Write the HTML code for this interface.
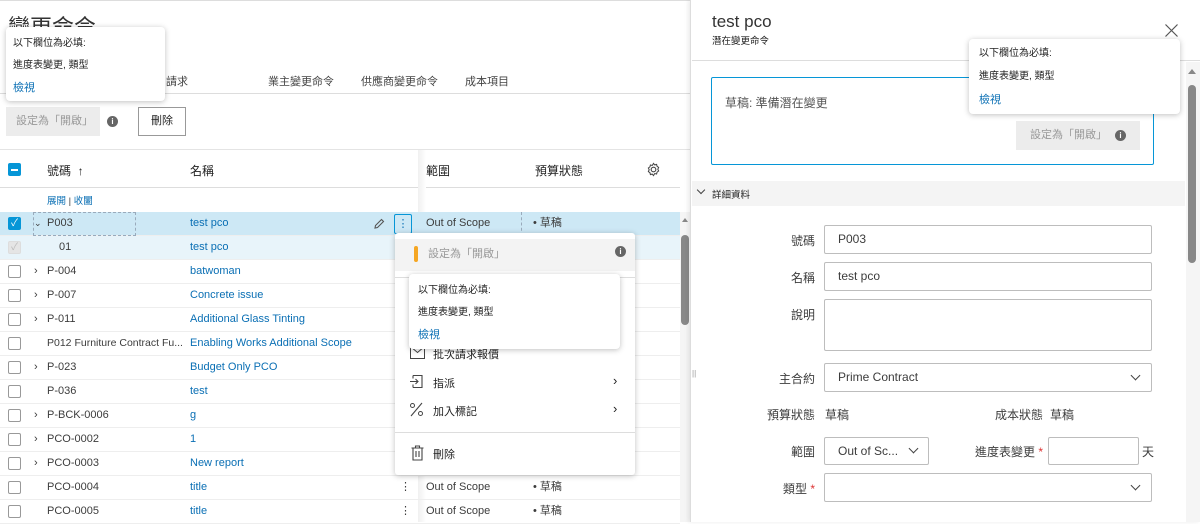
<!DOCTYPE html>
<html><head><meta charset="utf-8"><style>
*{box-sizing:border-box;margin:0;padding:0}
body{width:1200px;height:522px;overflow:hidden;background:#fff;font-family:"Liberation Sans","Noto Sans CJK TC",sans-serif;font-size:11px;color:#3c3c3c;position:relative}
.a{position:absolute}
.row{position:absolute;left:0;width:680px;height:24px;border-bottom:1px solid #eee;font-size:11px;line-height:23px}
.cb{position:absolute;left:8px;top:5px;width:13px;height:13px;border:1px solid #999;border-radius:2px;background:#fff}
.lnk{color:#0a6fb4}
.pop{position:absolute;background:#fff;border-radius:4px;box-shadow:0 1px 6px rgba(0,0,0,.25);font-size:10px;color:#222}
.inp{position:absolute;border:1px solid #bdbdbd;border-radius:2px;background:#fff;font-size:12px;color:#3c3c3c;padding-left:13px;line-height:27px}
.lbl{position:absolute;font-size:12px;color:#3c3c3c;text-align:right}
.chev{position:absolute;width:7px;height:7px;border-right:1.3px solid #444;border-bottom:1.3px solid #444;transform:rotate(45deg)}
.info{display:inline-block;width:11px;height:11px;border-radius:50%;background:#666;color:#fff;font-size:8px;line-height:11px;text-align:center;font-weight:bold}
</style></head><body>
<div class="a" style="left:0;top:0;width:1200px;height:1px;background:#ddd"></div>
<div class="a" style="left:8px;top:10px;font-size:22px;color:#333">變更命令</div>
<div class="a" style="left:166px;top:73px;font-size:11px;color:#444">請求</div>
<div class="a" style="left:268px;top:73px;font-size:11px;color:#444">業主變更命令</div>
<div class="a" style="left:361px;top:73px;font-size:11px;color:#444">供應商變更命令</div>
<div class="a" style="left:465px;top:73px;font-size:11px;color:#444">成本項目</div>
<div class="a" style="left:0;top:93px;width:690px;height:1px;background:#ddd"></div>
<div class="a" style="left:6px;top:107px;width:94px;height:29px;background:#ececec;color:#999;font-size:11px;line-height:29px;padding-left:10px">設定為「開啟」</div>
<div class="a" style="left:107px;top:115px"><span class="info">i</span></div>
<div class="a" style="left:138px;top:107px;width:48px;height:29px;border:1px solid #999;font-size:11px;line-height:27px;text-align:center;color:#222">刪除</div>
<div class="pop" style="left:6px;top:27px;width:159px;height:74px">
<div class="a" style="left:7px;top:7px">以下欄位為必填:</div>
<div class="a" style="left:7px;top:29px">進度表變更, 類型</div>
<div class="a lnk" style="left:7px;top:52px;font-size:11px">檢視</div>
</div>
<div class="a" style="left:0;top:149px;width:690px;height:1px;background:#e4e4e4"></div>
<div class="a" style="left:0;top:150px;width:418px;height:38px;border-bottom:1px solid #ddd"></div>
<div class="a" style="left:418px;top:150px;width:8px;height:372px;background:linear-gradient(90deg,rgba(0,0,0,.06),rgba(0,0,0,0))"></div>
<div class="a" style="left:8px;top:163px;width:13px;height:13px;background:#0696d7;border-radius:2px"><div style="margin:6px 3px;height:1.5px;background:#fff"></div></div>
<div class="a" style="left:47px;top:162px;font-size:12px;color:#222">號碼 &nbsp;↑</div>
<div class="a" style="left:190px;top:162px;font-size:12px;color:#222">名稱</div>
<div class="a" style="left:426px;top:162px;font-size:12px;color:#222">範圍</div>
<div class="a" style="left:535px;top:162px;font-size:12px;color:#222">預算狀態</div>
<svg class="a" style="left:646px;top:162px" width="15" height="15" viewBox="0 0 16 16"><circle cx="8" cy="8" r="2.5" fill="none" stroke="#444" stroke-width="1.2"/><path d="M8 1.5l1.3 1.6 2-.5.5 2 1.7 1.2-.9 1.9.9 1.9-1.7 1.2-.5 2-2-.5L8 14.5l-1.3-1.6-2 .5-.5-2-1.7-1.2.9-1.9-.9-1.9 1.7-1.2.5-2 2 .5z" fill="none" stroke="#444" stroke-width="1.1"/></svg>
<div class="a" style="left:426px;top:187px;width:254px;height:1px;background:#ddd"></div>
<div class="a" style="left:47px;top:193px;font-size:9.5px"><span class="lnk">展開</span> | <span class="lnk">收闔</span></div>
<div class="row" style="top:212px;background:#cde8f5">
<div class="cb" style="background:#0696d7;border-color:#0696d7;color:#fff;font-size:10px;line-height:11px;text-align:center">✓</div>
<span class="a" style="left:34px;font-size:9px">⌄</span>
<div class="a" style="left:33px;top:0;width:103px;height:24px;border:1px dashed #9ab"></div>
<span class="a" style="left:47px">P003</span><span class="a lnk" style="left:190px">test pco</span>
<svg class="a" style="left:373px;top:6px" width="12" height="12" viewBox="0 0 12 12"><path d="M8.5 1.5l2 2-6 6-2.5.5.5-2.5z" fill="none" stroke="#555" stroke-width="1.1"/></svg>
<div class="a" style="left:394px;top:2px;width:18px;height:20px;border:1px solid #0696d7;border-radius:2px;text-align:center;color:#0a6fb4;line-height:18px">⋮</div>
<div class="a" style="left:421px;top:0;width:101px;height:24px;border-right:1px dashed #9ab"></div>
<span class="a" style="left:426px">Out of Scope</span><span class="a" style="left:533px">• 草稿</span>
</div>
<div class="row" style="top:236px;background:#e8f4fa"><div class="cb" style="background:#e5e5e5;border-color:#ddd;color:#bbb;font-size:10px;line-height:11px;text-align:center">✓</div><span class="a" style="left:59px">01</span><span class="a lnk" style="left:190px">test pco</span></div>
<div class="row" style="top:260px"><div class="cb"></div><span class="a" style="left:34px">›</span><span class="a" style="left:47px">P-004</span><span class="a lnk" style="left:190px">batwoman</span></div>
<div class="row" style="top:284px"><div class="cb"></div><span class="a" style="left:34px">›</span><span class="a" style="left:47px">P-007</span><span class="a lnk" style="left:190px">Concrete issue</span></div>
<div class="row" style="top:308px"><div class="cb"></div><span class="a" style="left:34px">›</span><span class="a" style="left:47px">P-011</span><span class="a lnk" style="left:190px">Additional Glass Tinting</span></div>
<div class="row" style="top:332px"><div class="cb"></div><span class="a" style="left:47px;font-size:10.5px">P012 Furniture Contract Fu...</span><span class="a lnk" style="left:190px">Enabling Works Additional Scope</span></div>
<div class="row" style="top:356px"><div class="cb"></div><span class="a" style="left:34px">›</span><span class="a" style="left:47px">P-023</span><span class="a lnk" style="left:190px">Budget Only PCO</span></div>
<div class="row" style="top:380px"><div class="cb"></div><span class="a" style="left:47px">P-036</span><span class="a lnk" style="left:190px">test</span></div>
<div class="row" style="top:404px"><div class="cb"></div><span class="a" style="left:34px">›</span><span class="a" style="left:47px">P-BCK-0006</span><span class="a lnk" style="left:190px">g</span></div>
<div class="row" style="top:428px"><div class="cb"></div><span class="a" style="left:34px">›</span><span class="a" style="left:47px">PCO-0002</span><span class="a lnk" style="left:190px">1</span></div>
<div class="row" style="top:452px"><div class="cb"></div><span class="a" style="left:34px">›</span><span class="a" style="left:47px">PCO-0003</span><span class="a lnk" style="left:190px">New report</span></div>
<div class="row" style="top:476px"><div class="cb"></div><span class="a" style="left:47px">PCO-0004</span><span class="a lnk" style="left:190px">title</span><span class="a" style="left:400px">⋮</span><span class="a" style="left:426px">Out of Scope</span><span class="a" style="left:533px">• 草稿</span></div>
<div class="row" style="top:500px"><div class="cb"></div><span class="a" style="left:47px">PCO-0005</span><span class="a lnk" style="left:190px">title</span><span class="a" style="left:400px">⋮</span><span class="a" style="left:426px">Out of Scope</span><span class="a" style="left:533px">• 草稿</span></div>
<div class="a" style="left:680px;top:212px;width:10px;height:310px;background:#f5f5f5"></div>
<div class="a" style="left:682px;top:218px;border:3px solid transparent;border-bottom:4px solid #888;border-top:0"></div>
<div class="a" style="left:681px;top:235px;width:8px;height:90px;background:#888;border-radius:4px"></div>
<div class="pop" style="left:395px;top:233px;width:240px;height:242px;border-radius:3px">
<div class="a" style="left:0;top:6px;width:240px;height:32px;background:#f3f3f3"></div>
<div class="a" style="left:19px;top:13px;width:4px;height:16px;background:#f5a623;border-radius:2px"></div>
<div class="a" style="left:33px;top:12px;font-size:11px;color:#999">設定為「開啟」</div>
<div class="a" style="left:220px;top:13px"><span class="info">i</span></div>
<div class="a" style="left:0;top:44px;width:240px;height:1px;background:#ddd"></div>
<svg class="a" style="left:15px;top:113px" width="15" height="13" viewBox="0 0 15 13"><path d="M.5 .5h14v12H.5z M.5 .5l7 6 7-6" fill="none" stroke="#444" stroke-width="1"/></svg><div class="a" style="left:38px;top:113px;font-size:11px">批次請求報價</div>
<svg class="a" style="left:14px;top:141px" width="15" height="15" viewBox="0 0 15 15"><path d="M4 1.5h9v12H4 M4 1.5v3 M4 13.5v-3 M1 7.5h8 M6.5 5l2.5 2.5-2.5 2.5" fill="none" stroke="#444" stroke-width="1.1"/></svg><div class="a" style="left:38px;top:142px;font-size:11px">指派</div><div class="a" style="left:218px;top:140px;font-size:13px">›</div>
<svg class="a" style="left:14px;top:169px" width="15" height="15" viewBox="0 0 15 15"><path d="M13 1L2 14" stroke="#444" stroke-width="1.1"/><circle cx="3.5" cy="3.5" r="2" fill="none" stroke="#444"/><circle cx="11.5" cy="11.5" r="2" fill="none" stroke="#444"/></svg><div class="a" style="left:38px;top:170px;font-size:11px">加入標記</div><div class="a" style="left:218px;top:168px;font-size:13px">›</div>
<div class="a" style="left:0;top:199px;width:240px;height:1px;background:#ddd"></div>
<svg class="a" style="left:16px;top:212px" width="13" height="16" viewBox="0 0 13 16"><path d="M.5 3h12 M4.5 3V1h4v2 M2 3v12h9V3 M5 6v6 M8 6v6" fill="none" stroke="#444" stroke-width="1.1"/></svg><div class="a" style="left:38px;top:213px;font-size:11px">刪除</div>
</div>
<div class="pop" style="left:409px;top:274px;width:211px;height:75px">
<div class="a" style="left:9px;top:7px">以下欄位為必填:</div>
<div class="a" style="left:9px;top:29px">進度表變更, 類型</div>
<div class="a lnk" style="left:9px;top:52px;font-size:11px">檢視</div>
</div>
<div class="a" style="left:690px;top:0;width:510px;height:522px;background:#fff;border-left:1px solid #ddd;box-shadow:-2px 0 4px rgba(0,0,0,.08)"></div>
<div class="a" style="left:712px;top:12px;font-size:17px;color:#333">test pco</div>
<div class="a" style="left:712px;top:33px;font-size:9.5px;color:#222">潛在變更命令</div>
<svg class="a" style="left:1165px;top:24px" width="13" height="13" viewBox="0 0 13 13"><path d="M.5 .5l12 12M12.5 .5l-12 12" stroke="#555" stroke-width="1.2"/></svg>
<div class="a" style="left:692px;top:60px;width:508px;height:1px;background:#ddd"></div>
<div class="a" style="left:711px;top:77px;width:443px;height:88px;border:1px solid #0696d7;border-radius:2px"></div>
<div class="a" style="left:725px;top:94px;font-size:12px;color:#555">草稿: 準備潛在變更</div>
<div class="a" style="left:1016px;top:121px;width:124px;height:29px;background:#ececec;color:#999;font-size:11px;line-height:29px;padding-left:14px">設定為「開啟」</div>
<div class="a" style="left:1115px;top:129px"><span class="info">i</span></div>
<div class="pop" style="left:969px;top:39px;width:211px;height:75px">
<div class="a" style="left:10px;top:5px">以下欄位為必填:</div>
<div class="a" style="left:10px;top:28px">進度表變更, 類型</div>
<div class="a lnk" style="left:10px;top:52px;font-size:11px">檢視</div>
</div>
<div class="a" style="left:692px;top:181px;width:493px;height:25px;background:#f4f4f4"></div>
<div class="chev" style="left:698px;top:187px;width:6px;height:6px"></div>
<div class="a" style="left:712px;top:187px;font-size:9.5px;color:#222">詳細資料</div>
<div class="lbl" style="left:740px;top:232px;width:75px">號碼</div>
<div class="inp" style="left:824px;top:225px;width:328px;height:29px">P003</div>
<div class="lbl" style="left:740px;top:269px;width:75px">名稱</div>
<div class="inp" style="left:824px;top:262px;width:328px;height:29px">test pco</div>
<div class="lbl" style="left:740px;top:306px;width:75px">說明</div>
<div class="inp" style="left:824px;top:299px;width:328px;height:52px"></div>
<div class="lbl" style="left:740px;top:370px;width:75px">主合約</div>
<div class="inp" style="left:824px;top:363px;width:328px;height:29px">Prime Contract</div>
<div class="chev" style="left:1132px;top:372px"></div>
<div class="lbl" style="left:740px;top:406px;width:75px">預算狀態</div>
<div class="a" style="left:825px;top:406px;font-size:12px">草稿</div>
<div class="lbl" style="left:950px;top:406px;width:93px">成本狀態</div>
<div class="a" style="left:1050px;top:406px;font-size:12px">草稿</div>
<div class="lbl" style="left:740px;top:443px;width:75px">範圍</div>
<div class="inp" style="left:824px;top:437px;width:105px;height:28px">Out of Sc...</div>
<div class="chev" style="left:910px;top:445px"></div>
<div class="lbl" style="left:940px;top:443px;width:103px">進度表變更 <span style="color:#d33">*</span></div>
<div class="inp" style="left:1048px;top:437px;width:91px;height:28px"></div>
<div class="a" style="left:1142px;top:443px;font-size:12px">天</div>
<div class="lbl" style="left:740px;top:480px;width:75px">類型 <span style="color:#d33">*</span></div>
<div class="inp" style="left:824px;top:473px;width:328px;height:29px"></div>
<div class="chev" style="left:1132px;top:482px"></div>
<div class="a" style="left:1186px;top:62px;width:14px;height:460px;background:#f5f5f5"></div>
<div class="a" style="left:1188px;top:69px;border:4px solid transparent;border-bottom:5px solid #888;border-top:0"></div>
<div class="a" style="left:1188px;top:85px;width:8px;height:178px;background:#888;border-radius:4px"></div>
<div class="a" style="left:692px;top:369px;font-size:8px;color:#999">||</div>
</body></html>
